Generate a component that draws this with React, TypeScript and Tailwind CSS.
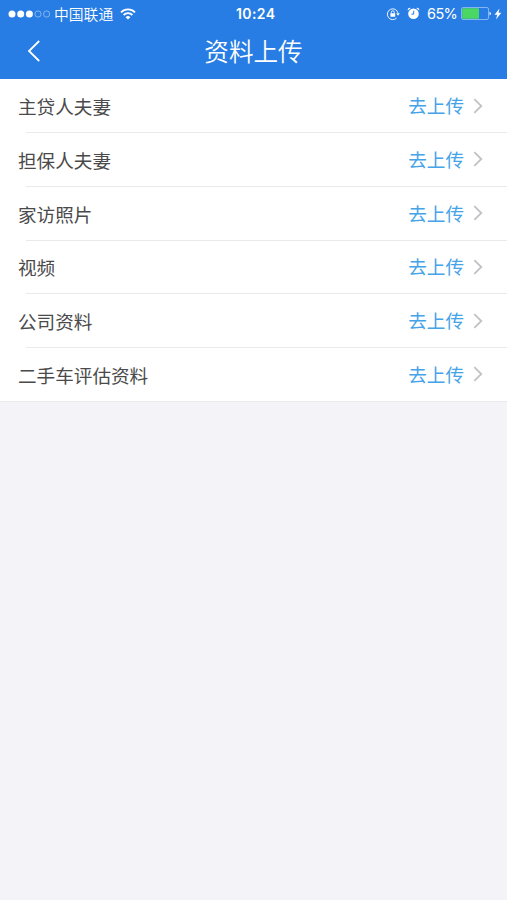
const rows = ['主贷人夫妻', '担保人夫妻', '家访照片', '视频', '公司资料', '二手车评估资料'];

function Signal() {
  return (
    <svg className="ml-[8px] h-[10px] w-[43px]" viewBox="0 0 43 10">
      {[4, 12.7, 21.4].map((x) => (
        <circle key={x} cx={x} cy="5" r="3.5" fill="#fff" />
      ))}
      {[30, 38.6].map((x) => (
        <circle key={x} cx={x} cy="5" r="3.1" fill="none" stroke="#fff" strokeOpacity=".6" strokeWidth=".7" />
      ))}
    </svg>
  );
}

function Wifi() {
  return (
    <svg className="ml-[7px] h-[12px] w-[16px]" viewBox="0 0 16 12" fill="none" stroke="#fff" strokeWidth="1.8">
      <path d="M1 4.3a10 10 0 0 1 14 0" />
      <path d="M3.6 7a6.3 6.3 0 0 1 8.8 0" />
      <path d="M8 11.6 5.6 9.2a3.5 3.5 0 0 1 4.8 0Z" fill="#fff" stroke="none" />
    </svg>
  );
}

function RotationLock() {
  return (
    <svg className="h-[14px] w-[14px]" viewBox="0 0 14 14" fill="none" stroke="#fff">
      <path d="M10.6 11A5.4 5.4 0 1 1 12 6" strokeWidth=".9" />
      <path d="M10.2 6.2h3.6L12 8.8Z" fill="#fff" stroke="none" />
      <rect x="4.4" y="6.2" width="4.8" height="3.6" rx=".4" fill="#fff" stroke="none" />
      <path d="M5.3 6.5V5.3a1.5 1.5 0 0 1 3 0v1.2" strokeWidth=".9" />
    </svg>
  );
}

function Alarm() {
  return (
    <svg className="ml-[7px] h-[13px] w-[13px]" viewBox="0 0 13 13">
      <circle cx="6.5" cy="6.8" r="5.3" fill="#fff" />
      <path d="M.8 3.6A2.2 2.2 0 0 1 3.8.9ZM12.2 3.6A2.2 2.2 0 0 0 9.2.9Z" fill="#fff" />
      <path d="M6.7 3.7v3.4H4.3" fill="none" stroke="#277de3" strokeWidth="1" />
    </svg>
  );
}

function Battery() {
  return (
    <svg className="ml-[4px] h-[13px] w-[31px]" viewBox="0 0 31 13">
      <rect x=".5" y=".5" width="27" height="12" rx="1.6" fill="none" stroke="#fff" strokeOpacity=".55" strokeWidth=".8" />
      <rect x="1.2" y="1.2" width="16.8" height="10.6" rx=".8" fill="#4bd763" />
      <path d="M28.5 4.7a2 2 0 0 1 0 3.8Z" fill="#fff" />
    </svg>
  );
}

export default function App() {
  return (
    <div className="h-[900px] w-[507px] overflow-hidden bg-[#f3f3f8] font-['Noto_Sans_CJK_SC',sans-serif]">
      <header className="h-[79px] bg-[#277de3] text-white">
        <div className="grid h-[27px] grid-cols-[236px_1fr_auto] items-center">
          <div className="flex items-center">
            <Signal />
            <span className="ml-[3px] text-[14.8px] leading-[27px] font-[350]">中国联通</span>
            <Wifi />
          </div>
          <span className="font-['Inter',sans-serif] text-[14px] font-semibold leading-[27px] tracking-[0.4px]">10:24</span>
          <div className="flex items-center pr-[5px]">
            <RotationLock />
            <Alarm />
            <span className="ml-[7px] w-[30px] whitespace-nowrap font-['Inter',sans-serif] text-[14.5px] leading-[27px] tracking-[-0.6px]">65%</span>
            <Battery />
            <svg className="ml-[2px] h-[12px] w-[8px]" viewBox="0 0 8 12">
              <path d="M5.5.5.5 6.8h2.8L2 11.5l5.3-6.7H4.5Z" fill="#fff" />
            </svg>
          </div>
        </div>
        <div className="grid h-[48px] grid-cols-[48px_1fr_48px] items-center">
          <svg className="ml-[27px] h-[24px] w-[14px]" viewBox="0 0 14 24" fill="none" stroke="#fff" strokeWidth="1.8">
            <path d="M12.2 2 2 12l10.2 10" />
          </svg>
          <h1 className="pb-[2px] text-center text-[24.6px] leading-[46px] font-[350]">资料上传</h1>
        </div>
      </header>
      <main className="h-[323px] border-b border-[#e9e9ed] bg-white">
        {rows.map((label, i) => (
          <div key={label} className="h-[53.75px]">
            <div className="flex h-[53px] items-center justify-between pl-[18px] pr-[24px]">
              <span className="text-[18.6px] leading-[53px] text-[#4a4a4a]">{label}</span>
              <div className="flex items-center gap-[9px]">
                <span className="pb-[2px] text-[18.6px] leading-[51px] text-[#45a3e8]">去上传</span>
                <svg className="h-[16px] w-[10px]" viewBox="0 0 10 16" fill="none" stroke="#c2c2c6" strokeWidth="1.8">
                  <path d="m1.3 1.2 7 6.8-7 6.8" />
                </svg>
              </div>
            </div>
            {i < rows.length - 1 && <div className="ml-[26px] h-px bg-[#e9e9eb]" />}
          </div>
        ))}
      </main>
    </div>
  );
}
